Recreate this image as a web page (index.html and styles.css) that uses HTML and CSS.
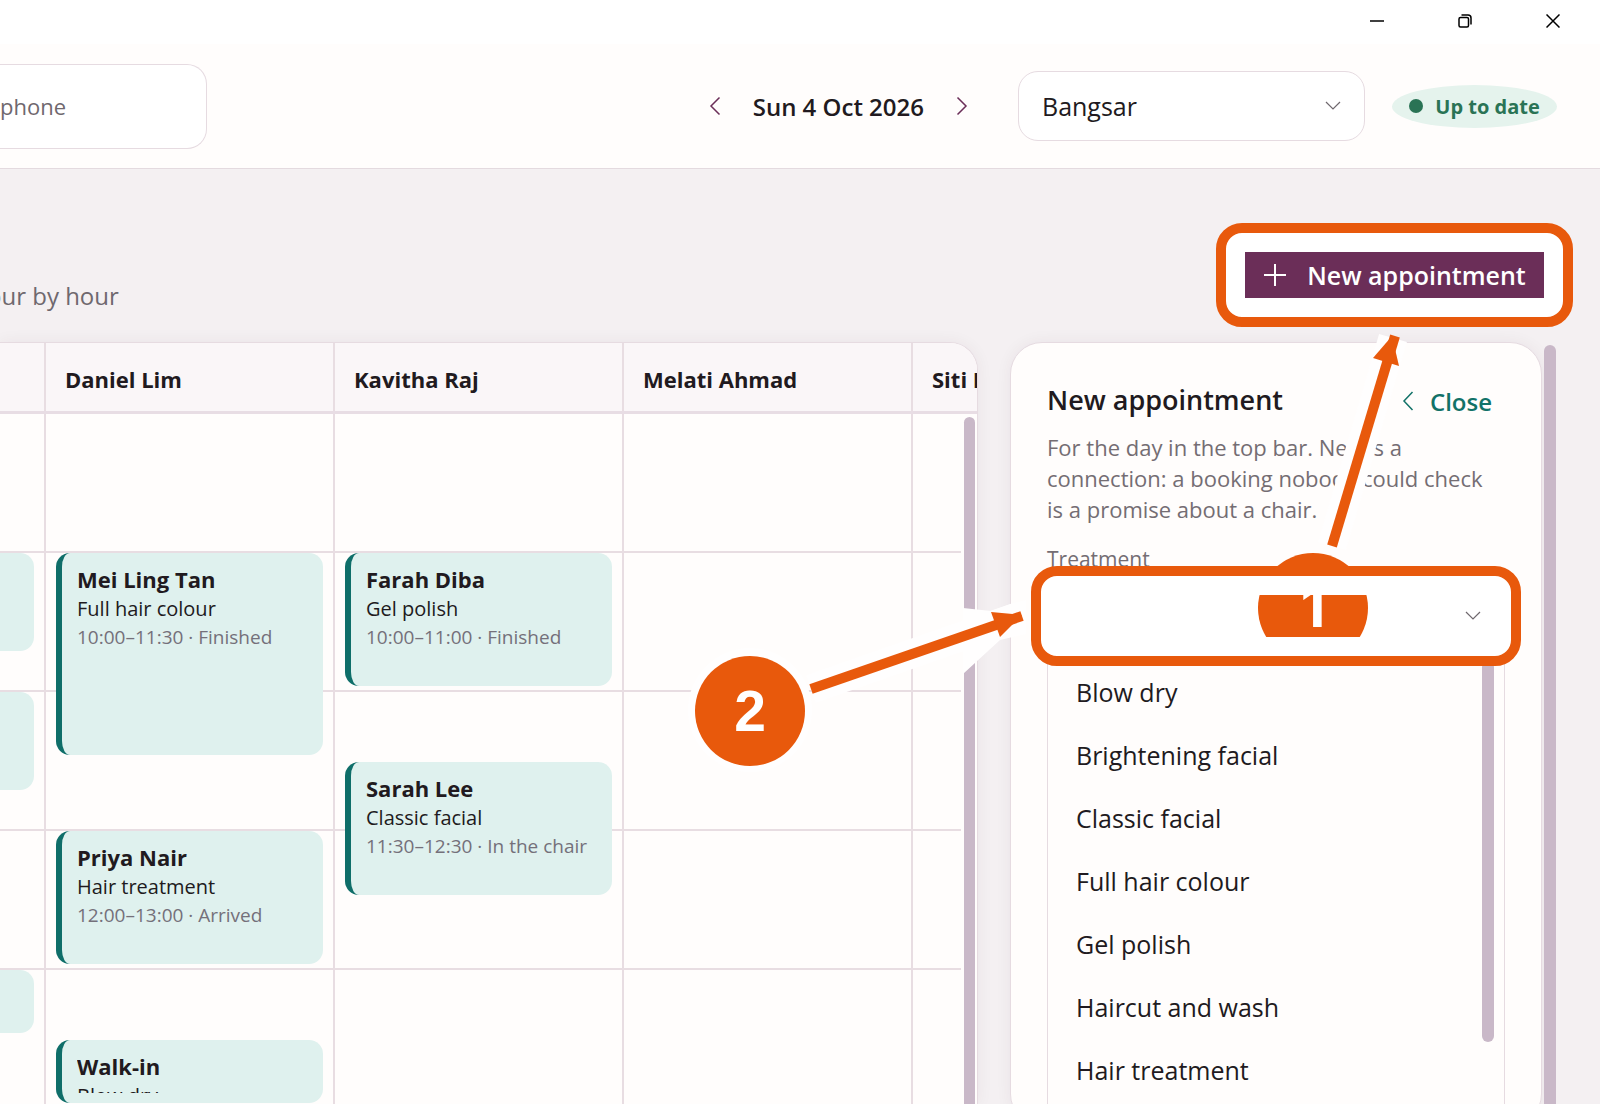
FILE: index.html
```html
<!DOCTYPE html>
<html lang="en">

<head>
    <meta charset="UTF-8">
    <meta name="viewport" content="width=device-width, initial-scale=1.0">
    <title>Appointments</title>
    <link rel="stylesheet" href="styles.css">
</head>

<body>
    <div class="titlebar">
        <button class="win-button" aria-label="Minimise">
            <svg width="14" height="14" viewBox="0 0 14 14"><path d="M0 7h14" /></svg>
        </button>
        <button class="win-button" aria-label="Restore">
            <svg width="14" height="14" viewBox="0 0 14 14">
                <rect x="1" y="3.5" width="9.5" height="9.5" rx="1.5" />
                <path d="M3.5 1h6.5a3 3 0 0 1 3 3v6.5" />
            </svg>
        </button>
        <button class="win-button" aria-label="Close window">
            <svg width="14" height="14" viewBox="0 0 14 14"><path d="M0.5 0.5l13 13M13.5 0.5l-13 13" /></svg>
        </button>
    </div>

    <header class="topbar">
        <input class="search" type="search" placeholder="phone" aria-label="Search">

        <div class="date-nav">
            <button class="icon-button" aria-label="Previous day">
                <svg width="12" height="20" viewBox="0 0 12 20"><path d="M10.5 1.5L2 10l8.5 8.5" /></svg>
            </button>
            <span class="date">Sun 4 Oct 2026</span>
            <button class="icon-button" aria-label="Next day">
                <svg width="12" height="20" viewBox="0 0 12 20"><path d="M1.5 1.5L10 10l-8.5 8.5" /></svg>
            </button>
        </div>

        <div class="branch">
            <select class="branch-select" aria-label="Branch">
                <option>Bangsar</option>
            </select>
            <svg class="chevron" width="16" height="10" viewBox="0 0 16 10"><path d="M1 1l7 7 7-7" /></svg>
        </div>

        <div class="status"><span class="dot"></span>Up to date</div>
    </header>

    <main>
        <div class="page-head">
            <p class="subtitle">our by hour</p>
            <div class="highlight highlight-button">
                <button class="new-button">
                    <svg width="24" height="24" viewBox="0 0 24 24"><path d="M12 1v22M1 12h22" /></svg>
                    New appointment
                </button>
            </div>
        </div>

        <div class="content">
            <section class="schedule">
                <div class="staff-row">
                    <div class="staff"></div>
                    <div class="staff">Daniel Lim</div>
                    <div class="staff">Kavitha Raj</div>
                    <div class="staff">Melati Ahmad</div>
                    <div class="staff">Siti N</div>
                </div>
                <div class="day">
                    <div class="columns">
                        <div class="column">
                            <div class="event m45 at-10"></div>
                            <div class="event m45 at-11"></div>
                            <div class="event m30 at-13"></div>
                        </div>
                        <div class="column">
                            <div class="event m90 at-10">
                                <div class="event-body">
                                    <h3>Mei Ling Tan</h3>
                                    <p>Full hair colour</p>
                                    <p class="time">10:00–11:30 · Finished</p>
                                </div>
                            </div>
                            <div class="event m60 at-12">
                                <div class="event-body">
                                    <h3>Priya Nair</h3>
                                    <p>Hair treatment</p>
                                    <p class="time">12:00–13:00 · Arrived</p>
                                </div>
                            </div>
                            <div class="event m30 at-1330">
                                <div class="event-body">
                                    <h3>Walk-in</h3>
                                    <p>Blow dry</p>
                                </div>
                            </div>
                        </div>
                        <div class="column">
                            <div class="event m60 at-10">
                                <div class="event-body">
                                    <h3>Farah Diba</h3>
                                    <p>Gel polish</p>
                                    <p class="time">10:00–11:00 · Finished</p>
                                </div>
                            </div>
                            <div class="event m60 at-1130">
                                <div class="event-body">
                                    <h3>Sarah Lee</h3>
                                    <p>Classic facial</p>
                                    <p class="time">11:30–12:30 · In the chair</p>
                                </div>
                            </div>
                        </div>
                        <div class="column"></div>
                        <div class="column"></div>
                    </div>
                    <div class="scrollbar"></div>
                </div>
            </section>

            <aside class="panel">
                <div class="panel-head">
                    <h2>New appointment</h2>
                    <button class="close-button">
                        <svg width="12" height="20" viewBox="0 0 12 20"><path d="M10.5 1L2 10l8.5 9" /></svg>
                        Close
                    </button>
                </div>
                <p class="hint">For the day in the top bar. Needs a connection: a booking nobody could check is a promise about a chair.</p>
                <label class="field-label" for="treatment">Treatment</label>
                <div class="highlight highlight-field">
                    <button class="combo" id="treatment" aria-haspopup="listbox" aria-expanded="true">
                        <svg class="chevron" width="16" height="10" viewBox="0 0 16 10"><path d="M1 1l7 7 7-7" /></svg>
                    </button>
                </div>
                <div class="menu">
                    <ul>
                        <li>Blow dry</li>
                        <li>Brightening facial</li>
                        <li>Classic facial</li>
                        <li>Full hair colour</li>
                        <li>Gel polish</li>
                        <li>Haircut and wash</li>
                        <li>Hair treatment</li>
                    </ul>
                    <div class="menu-thumb"></div>
                </div>
            </aside>
            <div class="page-scroll"></div>
        </div>
    </main>

    <!-- numbered steps drawn over the page -->
    <svg class="steps" width="960" height="600" viewBox="640 300 960 600">
        <defs>
            <clipPath id="stepOneClip">
                <path d="M1200 540h220v30h-220zM1200 595h220v42h-220z" />
            </clipPath>
        </defs>
        <g class="halo">
            <path class="halo-line" d="M1332 546L1393 338" />
            <path class="halo-line" d="M811 689L1020 616" />
            <path d="M963 608L991 611L1011 604L1026 600V634L1000 640L963 674Z" />
            <circle cx="750" cy="710" r="62" />
        </g>
        <g class="arrow">
            <path class="arrow-line" d="M1332 546L1395 336" />
            <path d="M1373 358L1392 336L1399 366Z" />
            <path class="arrow-line" d="M811 689L1022 616" />
            <path d="M991 612L1022 615L1000 637Z" />
            <circle cx="750" cy="711" r="55" />
            <circle cx="1313" cy="608" r="55" clip-path="url(#stepOneClip)" />
        </g>
        <text x="750" y="731">2</text>
        <text class="step-one" x="1313" y="627" clip-path="url(#stepOneClip)">1</text>
    </svg>
</body>

</html>
```
FILE: styles.css
```css
* {
    box-sizing: border-box;
}

body {
    font-family: "Open Sans", "Noto Sans", sans-serif;
    font-size: 24px;
    color: #211a20;
    background-color: #f4f0f2;
    margin: 0;
    height: 100vh;
    display: flex;
    flex-direction: column;
    overflow: hidden;
    position: relative;
}

h2,
h3,
p,
ul {
    margin: 0;
    padding: 0;
}

button,
input,
select {
    font-family: inherit;
    color: inherit;
    border: none;
    background: none;
    padding: 0;
}

button {
    cursor: pointer;
}

svg {
    display: block;
    fill: none;
}

/* window title bar */

.titlebar {
    flex: none;
    display: flex;
    justify-content: flex-end;
    height: 44px;
    padding: 0 3px 3px 0;
    background-color: #fff;
}

.win-button {
    width: 88px;
    display: flex;
    align-items: center;
    justify-content: center;
}

.win-button svg {
    stroke: #000;
    stroke-width: 1.5;
}

/* top bar */

.topbar {
    flex: none;
    display: flex;
    align-items: center;
    height: 125px;
    padding-right: 43px;
    background-color: #fffdfc;
    border-bottom: 1px solid #e4dadf;
}

.search {
    width: 207px;
    height: 85px;
    font-size: 22px;
    background-color: #fff;
    border: 1px solid #e6dbe1;
    border-left: none;
    border-radius: 0 20px 20px 0;
}

.search::placeholder {
    color: #6f686e;
    opacity: 1;
}

.date-nav {
    display: flex;
    align-items: center;
    gap: 32px;
    margin-left: auto;
}

.icon-button svg {
    stroke: #6b2e58;
    stroke-width: 1.5;
}

.date {
    font-weight: 600;
    white-space: nowrap;
}

.branch {
    position: relative;
    width: 347px;
    margin: 0 27px 0 50px;
}

.branch-select {
    display: block;
    appearance: none;
    width: 100%;
    height: 70px;
    padding: 0 23px;
    font-size: 25px;
    background-color: #fff;
    border: 1px solid #e6dbe1;
    border-radius: 20px;
}

.chevron {
    stroke: #6f686e;
    stroke-width: 1.2;
}

.branch .chevron {
    position: absolute;
    right: 24px;
    top: 30px;
}

.status {
    display: flex;
    align-items: center;
    justify-content: center;
    gap: 12px;
    width: 165px;
    height: 43px;
    font-size: 20px;
    font-weight: 700;
    white-space: nowrap;
    color: #2a7355;
    background-color: #e5f3ed;
    border-radius: 50%;
}

.dot {
    width: 14px;
    height: 14px;
    background-color: #2a7355;
    border-radius: 50%;
}

/* page */

main {
    flex: 1;
    min-height: 0;
    display: flex;
    flex-direction: column;
    padding-top: 54px;
}

.page-head {
    flex: none;
    display: flex;
    justify-content: space-between;
    align-items: flex-start;
    height: 119px;
    padding-right: 27px;
}

.subtitle {
    margin: 56px 0 0 -13px;
    line-height: 34px;
    color: #6f686e;
}

.highlight {
    background-color: #fff;
    border: 10px solid #e8590c;
    border-radius: 26px;
}

.highlight-button {
    padding: 19px;
}

.new-button {
    display: flex;
    align-items: center;
    justify-content: center;
    gap: 20px;
    width: 299px;
    height: 46px;
    font-size: 25px;
    font-weight: 600;
    white-space: nowrap;
    color: #fff;
    background-color: #6b2e58;
}

.new-button svg {
    stroke: #fff;
    stroke-width: 2;
}

.content {
    flex: 1;
    min-height: 0;
    display: flex;
    padding-right: 44px;
}

/* schedule */

.schedule {
    flex: 1;
    min-width: 0;
    display: flex;
    flex-direction: column;
    margin-right: 32px;
    background-color: #fffdfc;
    border: 1px solid #e6dbe1;
    border-left: none;
    border-bottom: none;
    border-radius: 0 28px 0 0;
    box-shadow: 0 0 16px rgba(60, 30, 50, 0.06);
    overflow: hidden;
}

.staff-row {
    flex: none;
    display: flex;
    height: 71px;
    background-color: #faf6f8;
    border-bottom: 3px solid #e8dde4;
}

.staff {
    flex: none;
    width: 289px;
    padding: 14px 19px;
    font-size: 22px;
    font-weight: 700;
    line-height: 44px;
    white-space: nowrap;
    border-right: 2px solid #e8dde2;
}

.staff:first-child,
.column:first-child {
    width: 46px;
}

.day {
    flex: 1;
    min-height: 0;
    display: flex;
}

.columns {
    flex: 1;
    min-width: 0;
    display: flex;
    overflow: hidden;
    background-image: repeating-linear-gradient(to bottom, transparent 0, transparent 137px, #e8dde2 137px, #e8dde2 139px);
}

.column {
    flex: none;
    display: grid;
    grid-auto-rows: 1px;
    width: 289px;
    padding: 0 10px;
    border-right: 2px solid #e8dde2;
    overflow: hidden;
}

.column:first-child {
    padding-left: 0;
}

/* one grid row per pixel, an hour is 139 rows */
.event {
    grid-column: 1;
    padding: 12px 10px 10px 15px;
    background-color: #dff1ee;
    border-left: 6px solid #0f6e69;
    border-radius: 14px;
    overflow: hidden;
}

.column:first-child .event {
    border-left: none;
    border-radius: 0 14px 14px 0;
}

.at-10 { grid-row-start: 140; }
.at-11 { grid-row-start: 279; }
.at-1130 { grid-row-start: 349; }
.at-12 { grid-row-start: 418; }
.at-13 { grid-row-start: 557; }
.at-1330 { grid-row-start: 627; }

.m30 { grid-row-end: span 63; }
.m45 { grid-row-end: span 98; }
.m60 { grid-row-end: span 133; }
.m90 { grid-row-end: span 202; }

.event-body {
    height: 100%;
    overflow: hidden;
}

.event h3,
.event p {
    font-size: 20px;
    line-height: 29px;
    white-space: nowrap;
}

.event h3 {
    font-size: 22px;
}

.event .time {
    font-size: 19px;
    line-height: 28px;
    color: #74707a;
}

.scrollbar {
    flex: none;
    width: 11px;
    margin: 3px 2px 0 3px;
    background-color: #c9b8c8;
    border-radius: 6px 6px 0 0;
}

/* new appointment panel */

.panel {
    flex: none;
    width: 532px;
    height: 784px;
    padding: 34px 36px;
    background-color: #fffdfc;
    border: 1px solid #e6dbe1;
    border-radius: 32px;
    box-shadow: 0 0 16px rgba(60, 30, 50, 0.06);
}

.panel-head {
    display: flex;
    justify-content: space-between;
    align-items: center;
    height: 44px;
    padding-right: 13px;
}

.panel-head h2 {
    font-size: 27px;
    font-weight: 600;
}

.close-button {
    display: flex;
    align-items: center;
    gap: 16px;
    padding-top: 4px;
    font-size: 24px;
    font-weight: 600;
    color: #127268;
}

.close-button svg {
    stroke: #127268;
    stroke-width: 1.5;
}

.hint {
    margin-top: 11px;
    padding-right: 13px;
    font-size: 22px;
    line-height: 31px;
    color: #746d73;
}

.field-label {
    display: block;
    margin-top: 18px;
    height: 33px;
    font-size: 21px;
    line-height: 33px;
    color: #746d73;
}

.highlight-field {
    position: relative;
    height: 100px;
    margin: -10px -16px 0;
}

.combo {
    display: flex;
    align-items: center;
    justify-content: flex-end;
    width: 100%;
    height: 100%;
    padding-right: 30px;
}

.menu {
    display: flex;
    height: 460px;
    margin-top: -5px;
    border: 1px solid #e6dbe1;
    border-top: none;
    border-bottom: none;
}

.menu ul {
    flex: 1;
    list-style: none;
    padding-left: 28px;
}

.menu li {
    font-size: 25px;
    line-height: 63px;
    height: 63px;
}

.menu-thumb {
    width: 12px;
    height: 381px;
    margin-right: 10px;
    background-color: #c9b8c8;
    border-radius: 6px;
}

.page-scroll {
    width: 12px;
    margin: 3px 0 0 2px;
    background-color: #c9b8c8;
    border-radius: 6px 6px 0 0;
}

/* step markers */

.steps {
    position: absolute;
    top: 300px;
    right: 0;
    pointer-events: none;
}

.halo {
    fill: #fffefe;
}

.halo-line {
    stroke: #fffefe;
    stroke-width: 29;
}

.arrow {
    fill: #e8590c;
}

.arrow-line {
    stroke: #e8590c;
    stroke-width: 10;
}

.steps text {
    font-family: "Liberation Sans", Arial, sans-serif;
    font-size: 57px;
    font-weight: 700;
    text-anchor: middle;
    fill: #fff;
}

.steps .step-one {
    font-family: Inter, Arial, sans-serif;
}
```
